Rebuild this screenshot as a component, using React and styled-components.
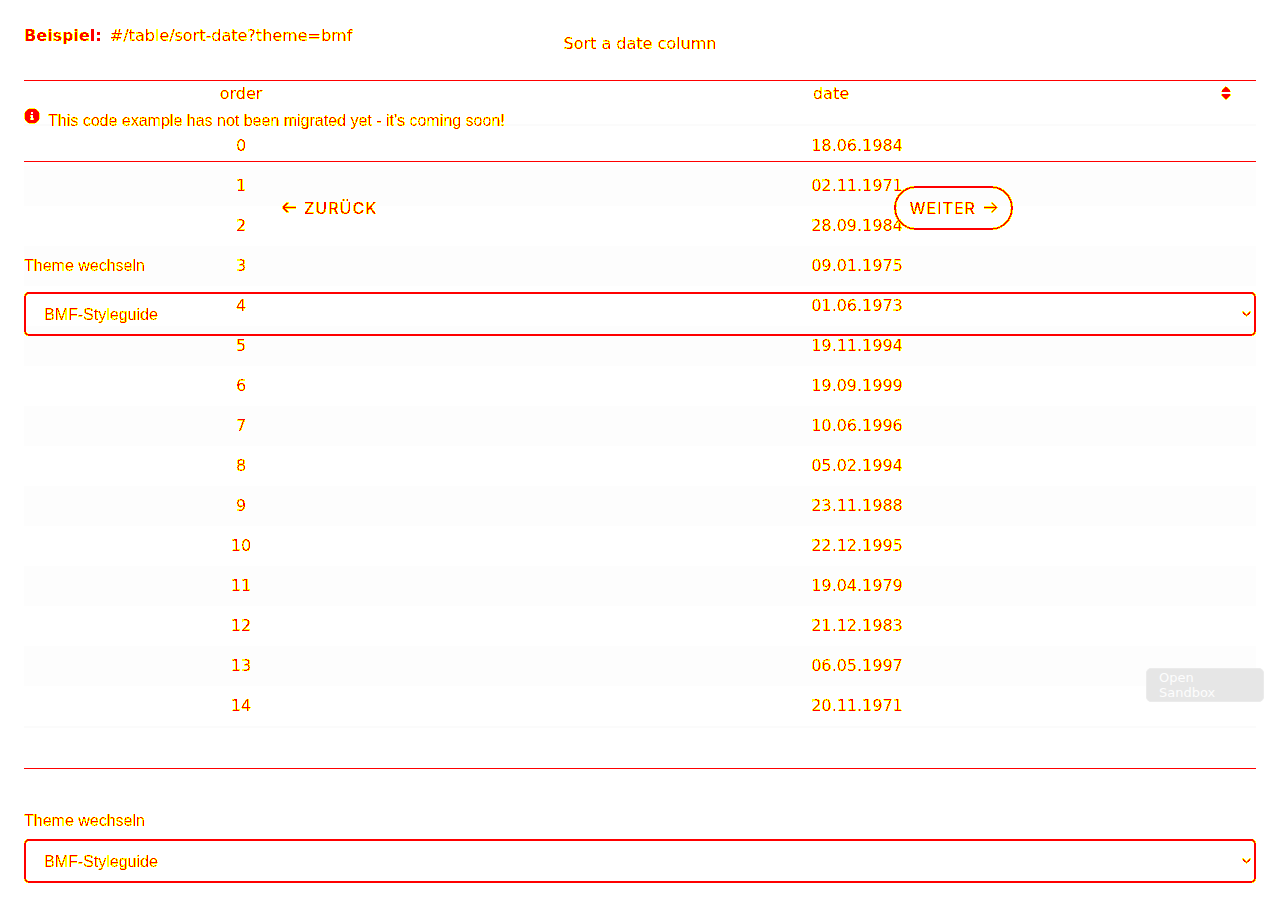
import React from "react";
import styled, { createGlobalStyle } from "styled-components";
import { FaInfoCircle, FaSort } from "react-icons/fa";

const sans = `"Liberation Sans", Arial, sans-serif`;
const wide = `"DejaVu Sans", Verdana, sans-serif`;

const GlobalStyle = createGlobalStyle`
  *, *::before, *::after { box-sizing: border-box; }
  body { margin: 0; background: #fff; color: #f00; font: 16px/20px ${sans}; }
`;

/* Two-tone ink: solid pixels stay red, soft edge pixels turn yellow. */
const InkFilter = () => (
  <svg width="0" height="0" aria-hidden="true" style={{ position: "absolute" }}>
    <filter id="ink" x="0" y="0" width="100%" height="100%" colorInterpolationFilters="sRGB">
      <feColorMatrix values="0 0 0 0 1  0 0 0 1 0  0 0 0 0 0  0 0 0 1 0" />
      <feComponentTransfer>
        <feFuncG type="discrete" tableValues="1 1 1 1 1 1 1 1 0 0" />
        <feFuncA type="discrete" tableValues="0 1 1 1 1 1 1 1 1 1" />
      </feComponentTransfer>
    </filter>
  </svg>
);

const Stack = styled.div`
  display: grid;
  grid-template-columns: minmax(0, 1fr);
  align-items: start;
`;

const Layer = styled.div`
  grid-area: 1 / 1;
  padding: 24px;
`;

const InfoLayer = styled(Layer)`
  filter: url(#ink);
`;

const Ink = styled.span`
  display: inline-block;
  filter: url(#ink);
`;

const ExampleTitle = styled.p`
  margin: 0;
  height: 57px;
  padding-top: 2px;
  border-bottom: 1px solid #f00;
  font-family: ${wide};

  b { margin-right: 3px; }
`;

const Notice = styled.div`
  display: flex;
  gap: 8px;
  height: 81px;
  padding-top: 27px;
  border-bottom: 1px solid #f00;

  svg { flex: none; }
  p { margin: 3px 0 0; }
`;

const Pager = styled.nav`
  display: flex;
  justify-content: space-around;
  gap: 16px;
  padding: 24px 0 26px;
`;

const PagerButton = styled.button`
  display: flex;
  align-items: center;
  gap: 8px;
  height: 44px;
  padding: 0 13px;
  border: 2px solid ${(p) => (p.$outlined ? "#f00" : "transparent")};
  border-radius: 22px;
  background: transparent;
  color: #f00;
  font: 500 16px/20px Inter, ${sans};
  letter-spacing: 1px;
  text-transform: uppercase;
`;

const Field = styled.div`
  display: flex;
  flex-direction: column;
  gap: ${(p) => p.$gap}px;
`;

const SelectBox = styled.div`
  display: grid;
  align-items: center;

  svg { grid-area: 1 / 1; justify-self: end; margin-right: 5px; pointer-events: none; }
`;

const Select = styled.select`
  grid-area: 1 / 1;
  width: 100%;
  height: 44px;
  padding: 2px 18px 0;
  border: 2px solid #f00;
  border-radius: 5px;
  appearance: none;
  background: transparent;
  color: #f00;
  font: 16px/20px ${sans};
`;

const Table = styled.table`
  width: 100%;
  table-layout: fixed;
  border-collapse: separate;
  border-spacing: 0;
  font-family: ${wide};
  text-align: center;
  border-bottom: 2px solid #fbfbfb;

  caption { height: 58px; padding-top: 10px; }
  th { height: 44px; padding: 2px 0 20px; font-weight: 400; border-bottom: 2px solid #fbfbfb; }
  th:first-child { width: 434px; }
  td { height: 40px; padding: 0; }
  tbody tr:nth-child(even) td { background: #fdfdfd; }
`;

const SortHead = styled.div`
  display: flex;
  align-items: center;
  padding-right: 22px;

  > span { flex: 1; padding-right: 14px; }
`;

const SortButton = styled.button`
  display: flex;
  justify-content: center;
  width: 16px;
  margin: 0;
  padding: 0 0 2px;
  border: 0;
  background: transparent;
  color: #f00;
  filter: url(#ink);
`;

const ThemeFooter = styled.footer`
  margin-top: 40px;
  padding-top: 42px;
  border-top: 1px solid #f00;
  filter: url(#ink);
`;

const SandboxButton = styled.button`
  position: absolute;
  right: 16px;
  top: 668px;
  width: 118px;
  height: 34px;
  padding: 1px 40px 1px 12px;
  border: 1px solid #ebebeb;
  border-radius: 5px;
  background: #e6e6e6;
  color: #fdfdfd;
  font: 13px/15px ${wide};
  text-align: left;
`;

const Arrow = ({ back }) => (
  <svg width="14" height="14" viewBox="0 0 14 14" fill="none" stroke="currentColor" strokeWidth="1.5" aria-hidden="true">
    {back ? <path d="M14 6.500H1M6 1.500 1 6.500 6 11.500" /> : <path d="M0 6.500h12.500M7.500 1.500l5 5-5 5" />}
  </svg>
);

const ThemeField = ({ id, gap }) => (
  <Field $gap={gap}>
    <label htmlFor={id}>Theme wechseln</label>
    <SelectBox>
      <Select id={id} defaultValue="bmf">
        <option value="bmf">BMF-Styleguide</option>
      </Select>
      <svg width="9" height="6" viewBox="0 0 9 6" fill="none" stroke="currentColor" strokeWidth="1.4" aria-hidden="true">
        <path d="M.5 1l4 3.800L8.500 1" />
      </svg>
    </SelectBox>
  </Field>
);

const dates = [
  "18.06.1984", "02.11.1971", "28.09.1984", "09.01.1975", "01.06.1973",
  "19.11.1994", "19.09.1999", "10.06.1996", "05.02.1994", "23.11.1988",
  "22.12.1995", "19.04.1979", "21.12.1983", "06.05.1997", "20.11.1971",
];

export default function App() {
  return (
    <>
      <GlobalStyle />
      <InkFilter />
      <Stack>
        <Layer>
          <Table>
            <caption><Ink>Sort a date column</Ink></caption>
            <thead>
              <tr>
                <th scope="col"><Ink>order</Ink></th>
                <th scope="col">
                  <SortHead>
                    <span><Ink>date</Ink></span>
                    <SortButton aria-label="Sort by date"><FaSort size={16} /></SortButton>
                  </SortHead>
                </th>
              </tr>
            </thead>
            <tbody>
              {dates.map((date, order) => (
                <tr key={date}>
                  <td><Ink>{order}</Ink></td>
                  <td><Ink>{date}</Ink></td>
                </tr>
              ))}
            </tbody>
          </Table>
          <ThemeFooter><ThemeField id="theme-bottom" gap={8} /></ThemeFooter>
        </Layer>
        <InfoLayer>
          <ExampleTitle><b>Beispiel:</b> #/table/sort-date?theme=bmf</ExampleTitle>
          <Notice>
            <FaInfoCircle size={16} aria-hidden="true" />
            <p>This code example has not been migrated yet - it's coming soon!</p>
          </Notice>
          <Pager>
            <PagerButton><Arrow back />Zurück</PagerButton>
            <PagerButton $outlined>Weiter<Arrow /></PagerButton>
          </Pager>
          <ThemeField id="theme-top" gap={16} />
        </InfoLayer>
      </Stack>
      <SandboxButton>Open Sandbox</SandboxButton>
    </>
  );
}
